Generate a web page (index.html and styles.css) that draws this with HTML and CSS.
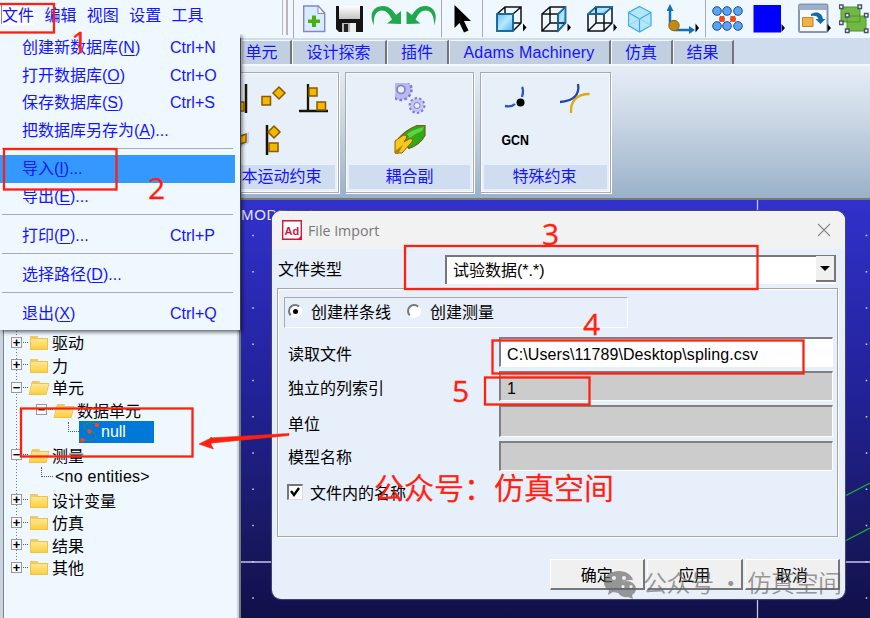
FILE: index.html
```html
<!DOCTYPE html>
<html lang="zh-CN">
<head>
    <meta charset="UTF-8">
    <meta name="viewport" content="width=device-width, initial-scale=1.0">
    <title>Adams View</title>
    <link rel="stylesheet" href="styles.css">
</head>
<body>
<div class="app">
    <header class="topbar">
        <nav class="menubar">
            <span class="active">文件</span>
            <span>编辑</span>
            <span>视图</span>
            <span>设置</span>
            <span>工具</span>
        </nav>
        <div class="toolbar">
            <!-- new / save / redo / undo -->
            <svg width="33" height="38" viewBox="303 0 33 38">
                <path d="M303.7 6h14.5l6.5 7v18.500h-21z" fill="#d9ecfb" stroke="#8585c8" stroke-width="1.4"/>
                <path d="M318 6v7.500h6.500z" fill="#fff" stroke="#8585c8"/>
                <path d="M312 15.500h4v4h4v3.500h-4v4h-4v-4h-4v-3.500h4z" fill="#4aaf12"/>
            </svg>
            <svg width="35" height="38" viewBox="336 0 35 38">
                <path d="M336 6h27v26h-24l-3-3z" fill="#151515"/>
                <path d="M339 6h21v13h-21z" fill="url(#shine)"/>
                <path d="M342 23h14v9h-14z" fill="#b9b9b9"/>
                <path d="M344 24h4v8h-4z" fill="#222"/>
                <path d="M350 23h6v9h-6z" fill="#eee"/>
            </svg>
            <svg width="35" height="38" viewBox="371 0 35 38">
                <path d="M374 25.500c-6-12 0-19.500 9-19.500 6 0 10 4 13 9l5-4v13l-14-.5 5-4c-3-6-6-9-10-9-6 0-9 6-8 15z" fill="#22a84c"/>
            </svg>
            <svg width="35" height="38" viewBox="406 0 35 38">
                <path d="M434 25.500c5-12-1-19.500-9-19.500-6 0-10 4-13 9l-5.500-4v13l14-.5-5-4c3-6 6-9 10-9 6 0 9 6 8.500 15z" fill="#22a84c"/>
            </svg>
            <i class="split"></i>
            <svg width="40" height="38" viewBox="442 0 40 38">
                <path d="M454.500 5v23l5-5 4.500 9.500 4.500-2-4.500-9.500h7z" fill="#000"/>
            </svg>
            <i class="split"></i>
            <!-- view cubes -->
            <svg width="58" height="38" viewBox="483 0 58 38">
                <path d="M497 14h16v17h-16z" fill="url(#face)"/>
                <path d="M497 14l8-7h16v16l-8 8h-16zM497 14h16v17M513 14l8-7M505 7v6M513 23h8" fill="none" stroke="#111" stroke-width="1.5"/>
                <path d="M497 14h16v17h-16z" fill="none" stroke="#1476b8" stroke-width="1.500"/>
                <path d="M523 23.500v8l3.500-4z"/>
            </svg>
            <svg width="46" height="38" viewBox="541 0 46 38">
                <path d="M558 14l7.500-7v16l-7.500 8z" fill="url(#face)"/>
                <path d="M542 14l8-7h15.500v16l-7.500 8h-16zM542 14h16v17M558 14l7.500-7M550 7v16h15.500M550 23l-8 8" fill="none" stroke="#111" stroke-width="1.500"/>
                <path d="M558 14l7.500-7v16l-7.500 8z" fill="none" stroke="#1476b8" stroke-width="1.300"/>
                <path d="M567.500 23.500v8l3.500-4z"/>
            </svg>
            <svg width="41" height="38" viewBox="587 0 41 38">
                <path d="M588 14l8-7h16l-8 7z" fill="url(#face)"/>
                <path d="M588 14l8-7h16v16l-8 8h-16zM588 14h16v17M604 14l8-7M596 7v16h16M596 23l-8 8" fill="none" stroke="#111" stroke-width="1.500"/>
                <path d="M588 14l8-7h16l-8 7z" fill="none" stroke="#1476b8" stroke-width="1.300"/>
                <path d="M613.500 23.500v8l3.500-4z"/>
            </svg>
            <svg width="39" height="38" viewBox="628 0 39 38">
                <path d="M639.500 6.500l11.500 6v13l-11.500 6.500-11-6.500v-13z" fill="#b5e6fc" stroke="#39abe6" stroke-width="1.200"/>
                <path d="M628.500 12.500l11 6.500v13M651 12.500l-11.500 6.500" fill="none" stroke="#39abe6" stroke-width="1.200"/>
                <path d="M629 25l10.500-6 11 6" fill="none" stroke="#8fd2f2"/>
            </svg>
            <svg width="38" height="38" viewBox="667 0 38 38">
                <path d="M670 26V9M674 30h17" stroke="#1270ba" stroke-width="2.500"/>
                <path d="M666.500 11l3.500-7 3.500 7zM689 26v8l6-4z" fill="#1270ba"/>
                <circle cx="674" cy="25.500" r="5.200" fill="#c18a16" stroke="#936606"/>
                <path d="M695.500 23.500v9l3.500-4.500z"/>
            </svg>
            <i class="split"></i>
            <svg width="47" height="38" viewBox="706 0 47 38">
                <path d="M717 11l5 8-5 7M727 11l-5 8 5 7M727 11l6 8-6 7M738 11l-5 8 5 7" stroke="#333" fill="none" stroke-dasharray="2 1"/>
                <g fill="#5ba4f4" stroke="#174f97">
                    <circle cx="717" cy="11" r="4.300"/><circle cx="727" cy="11" r="4.300"/><circle cx="738" cy="11" r="4.300"/>
                    <circle cx="717" cy="26" r="4.300"/><circle cx="727" cy="26" r="4.300"/><circle cx="738" cy="26" r="4.300"/>
                </g>
                <circle cx="722" cy="19" r="3" fill="#f4461b"/><circle cx="733" cy="19" r="3" fill="#f4461b"/>
            </svg>
            <svg width="45" height="38" viewBox="753 0 45 38">
                <path d="M753.500 5h27.500v27.500h-27.500z" fill="#00f"/>
                <path d="M781.500 24v8l3.500-4z"/>
            </svg>
            <svg width="41" height="38" viewBox="798 0 41 38">
                <rect x="799" y="4.500" width="28.500" height="27.500" rx="1.500" fill="#f7fafd" stroke="#8497b4" stroke-width="2"/>
                <path d="M799 5h28v5h-28z" fill="#9caecb"/>
                <path d="M802.500 17.500h10.500v9h-10.500z" fill="#efb244" stroke="#bc862b"/>
                <path d="M811 14c6-3 11-1 12 5h2.500l-5 5-5-5h3c-1-3-3-4-7.500-3z" fill="#126aa8"/>
                <path d="M827.500 24v8l3.500-4z"/>
            </svg>
            <svg width="31" height="38" viewBox="839 0 31 38">
                <path d="M841 7h19v15h-19zM847 16h19v15h-19z" fill="#72b844" stroke="#4e9425"/>
                <g fill="#fff" stroke="#47516b" stroke-width="1.400">
                    <path d="M839.500 5h3.500v3.500h-3.500zM858 5h3.500v3.500h-3.500zM839.500 21h3.500v3.500h-3.500zM845.500 13.500h3.500v3.500h-3.500zM864.500 13.500h3.500v3.500h-3.500zM845.500 29h3.500v3.500h-3.500zM864.500 29h3.500v3.500h-3.500z"/>
                </g>
            </svg>
        </div>
    </header>

    <div class="workspace">
        <aside class="browser">
            <ul class="tree">
                <li><i class="toggle">+</i><i class="folder"></i>驱动</li>
                <li><i class="toggle">+</i><i class="folder"></i>力</li>
                <li><i class="toggle">−</i><i class="folder open"></i>单元</li>
                <li class="level2"><i class="toggle">−</i><i class="folder open"></i>数据单元</li>
                <li class="level3"><i class="branch"></i><span class="selected">
                    <svg width="22" height="22" viewBox="0 0 22 22">
                        <path d="M18 3C6-1 1 6 9 9c13 4 9 12-6 10" fill="none" stroke="#357f78" stroke-width="1.300"/>
                        <circle cx="18" cy="4" r="2.200" fill="#f24820"/><circle cx="10.500" cy="10.500" r="2.200" fill="#f24820"/><circle cx="3.500" cy="19" r="2.200" fill="#f24820"/>
                    </svg>null</span></li>
                <li><i class="toggle">−</i><i class="folder open"></i>测量</li>
                <li class="level2 leaf"><i class="branch"></i>&lt;no entities&gt;</li>
                <li><i class="toggle">+</i><i class="folder"></i>设计变量</li>
                <li><i class="toggle">+</i><i class="folder"></i>仿真</li>
                <li><i class="toggle">+</i><i class="folder"></i>结果</li>
                <li><i class="toggle">+</i><i class="folder"></i>其他</li>
            </ul>
        </aside>

        <main class="main">
            <div class="tabs">
                <span class="tab w51">单元</span>
                <span class="tab w95">设计探索</span>
                <span class="tab w62">插件</span>
                <span class="tab w162 latin">Adams Machinery</span>
                <span class="tab w62">仿真</span>
                <span class="tab w60">结果</span>
            </div>
            <div class="ribbon">
                <section class="panel joints">
                    <svg class="art" width="98" height="86" viewBox="241 74 98 86">
                        <path d="M246 83v29" stroke="#191400" stroke-width="2.500"/>
                        <g fill="#f3b800" stroke="#8a5a00" stroke-width="1.500">
                            <path d="M238 101h6v9h-6zM262 95.500h8.500v8.500h-8.500zM279 86l6 6-6 6-6-6z"/>
                        </g>
                        <path d="M308 83v26M299 110h29" stroke="#191400" stroke-width="2.300"/>
                        <path d="M309 87h8v8h-8zM317 101h8.500v8h-8.500z" fill="#f3b800" stroke="#8a5a00" stroke-width="1.500"/>
                        <path d="M240 134l9-3v11l-9 5z" fill="#c9ccf2"/>
                        <path d="M238 136l8-3v8l-8 3z" fill="#f3b800" stroke="#8a5a00" stroke-width="1.500"/>
                        <path d="M267 124v30" stroke="#191400" stroke-width="2.500"/>
                        <path d="M274 125l6 6-6 6-6-6zM269 142h9v8.500h-9z" fill="#f3b800" stroke="#8a5a00" stroke-width="1.500"/>
                    </svg>
                    <h3>本运动约束</h3>
                </section>
                <section class="panel couplers">
                    <svg class="art" width="127" height="86" viewBox="346 74 127 86">
                        <svg x="395" y="82" width="31" height="31" viewBox="395 82 31 31">
                            <g fill="none" stroke="#7c7cd0">
                                <circle cx="401" cy="88.500" r="7" stroke="#b9b9f1" stroke-width="7"/>
                                <circle cx="401" cy="88.500" r="10.500" stroke-width="2.500" stroke-dasharray="2.700 2.400"/>
                                <circle cx="401" cy="88.500" r="4" stroke-width="1.600"/>
                                <circle cx="417" cy="104.500" r="5" stroke="#c5c5f5" stroke-width="4"/>
                                <circle cx="417" cy="104.500" r="7.400" stroke-width="2" stroke-dasharray="2.500 2.100"/>
                                <circle cx="417" cy="104.500" r="3"/>
                            </g>
                        </svg>
                        <path d="M399 137c5-6 12-10 18-12.500h8v10c-4 7-10 11-16 13z" fill="#2eac18" stroke="#7c5a14" stroke-width="1.200"/>
                        <path d="M407 133c6-4 12-6 17-7l-2 4c-5 2-9 4-12 7z" fill="#5fd344"/>
                        <path d="M395 140l7-5c3-2 6 0 4 3l-2 3 5-3c3-1 5 1 2 4l-9 10h-7z" fill="#f4c81c" stroke="#936000"/>
                        <path d="M395 150l8-6-5 9h-3z" fill="#b08400"/>
                    </svg>
                    <h3>耦合副</h3>
                </section>
                <section class="panel special">
                    <svg class="art" width="129" height="86" viewBox="481 74 129 86">
                        <path d="M522 86c2 3 1 6 0 10M505 105c5 1 8 0 10-2" fill="none" stroke="#2456c8" stroke-width="2.300"/>
                        <circle cx="520.500" cy="101.500" r="4"/>
                        <path d="M589.500 93c-14 0-19 8-18.500 19" fill="none" stroke="#deaa0e" stroke-width="2.300"/>
                        <path d="M560 101c13-1 20-7 18-18" fill="none" stroke="#2444b4" stroke-width="2.300"/>
                        <text x="501.500" y="144" textLength="27.500" lengthAdjust="spacingAndGlyphs" class="gcn">GCN</text>
                    </svg>
                    <h3>特殊约束</h3>
                </section>
            </div>
            <div class="viewport">
                <svg width="629" height="418" viewBox="241 200 629 418">
                    <path d="M757.500 200v418M241 562h629" stroke="#c5c5e6" stroke-width="1.300"/>
                    <path d="M845 496l25-13M845 541l25-13" stroke="#15b52d" stroke-width="1.300"/>
                    <path d="M253 234.800V618M866.500 234.800V618" stroke="#d4d4ef" stroke-width="1.500" stroke-dasharray="1.500 34.750"/>
                    <text x="241" y="220" class="model">MODEL_1</text>
                </svg>
            </div>
        </main>
    </div>

    <div class="file-menu">
        <div class="item">创建新数据库(<u>N</u>)<kbd>Ctrl+N</kbd></div>
        <div class="item">打开数据库(<u>O</u>)<kbd>Ctrl+O</kbd></div>
        <div class="item">保存数据库(<u>S</u>)<kbd>Ctrl+S</kbd></div>
        <div class="item">把数据库另存为(<u>A</u>)...</div>
        <hr>
        <div class="item hover">导入(<u>I</u>)...</div>
        <div class="item">导出(<u>E</u>)...</div>
        <hr>
        <div class="item">打印(<u>P</u>)...<kbd>Ctrl+P</kbd></div>
        <hr>
        <div class="item">选择路径(<u>D</u>)...</div>
        <hr>
        <div class="item">退出(<u>X</u>)<kbd>Ctrl+Q</kbd></div>
    </div>

    <div class="dialog">
        <div class="titlebar">
            <svg width="20" height="20" viewBox="0 0 20 20">
                <path d="M.7.700h18.600v18.600H.7z" fill="#fff" stroke="#c8193c" stroke-width="1.400"/>
                <path d="M20 15v5h-5z" fill="#c8193c"/>
                <text x="2.500" y="15" class="logo">Ad</text>
            </svg>
            <span class="title">File Import</span>
            <svg width="14" height="14" viewBox="0 0 14 14"><path d="M1 1l12 12M13 1L1 13" stroke="#888" stroke-width="1.100"/></svg>
        </div>
        <div class="type-row">
            <label>文件类型</label>
            <div class="combo">试验数据(*.*)<i class="drop"></i></div>
        </div>
        <div class="group">
            <div class="radios">
                <i class="radio on"></i><span>创建样条线</span>
                <i class="radio"></i><span>创建测量</span>
            </div>
            <div class="field h34"><label>读取文件</label><div class="input white">C:\Users\11789\Desktop\spling.csv</div></div>
            <div class="field h34"><label>独立的列索引</label><div class="input">1</div></div>
            <div class="field h36"><label>单位</label><div class="input"></div></div>
            <div class="field h30"><label>模型名称</label><div class="input"></div></div>
            <div class="check-row">
                <i class="checkbox"><svg width="12" height="12" viewBox="0 0 12 12"><path d="M2 5l3 4 5-7" fill="none" stroke="#000" stroke-width="2.400"/></svg></i>
                <span>文件内的名称</span>
            </div>
        </div>
        <div class="buttons">
            <button>确定</button>
            <button>应用</button>
            <button>取消</button>
        </div>
    </div>

    <!-- step marks drawn over the windows -->
    <svg class="marks" width="870" height="618" viewBox="0 0 870 618">
        <g fill="none" stroke="#ff2010" stroke-width="2.300">
            <rect x="-3" y="4" width="57" height="28.500"/>
            <rect x="4" y="149" width="112.500" height="40.500"/>
            <rect x="21" y="408.500" width="171.500" height="48"/>
            <rect x="405" y="246" width="352.500" height="43"/>
            <rect x="492.500" y="340.500" width="311" height="33"/>
            <rect x="485" y="377.500" width="104.500" height="27"/>
        </g>
        <path d="M289 433.500l-79 4.500 2-.500-13 6.500 14.500 5-2.500-4.500 1-1.500 77-7.500z" fill="#ff2010" stroke="#ff2010" stroke-width=".6"/>
        <g class="step">
            <text x="71" y="53">1</text>
            <text x="148" y="199">2</text>
            <text x="542" y="245">3</text>
            <text x="583" y="335">4</text>
            <text x="452" y="402">5</text>
        </g>
        <text x="374" y="499" class="account">公众号：仿真空间</text>
        <g class="watermark">
            <path fill-rule="evenodd" d="M619 571c-9 0-15 5-15 11 0 4 2 7 5 8l-1 5 5-3 5 1c-2-8 5-14 15-13-1-5-7-9-14-9zm-5 5a2 2 0 1 1 0 4 2 2 0 0 1 0-4zm10 0a2 2 0 1 1 0 4 2 2 0 0 1 0-4z"/>
            <path fill-rule="evenodd" d="M627 581c-6 0-10 4-10 8 0 5 5 9 11 8l5 2-1-4c2-1 4-3 4-6 0-4-4-8-9-8zm-4 4a1.600 1.600 0 1 1 0 3.200 1.600 1.600 0 0 1 0-3.200zm8 0a1.600 1.600 0 1 1 0 3.200 1.600 1.600 0 0 1 0-3.200z"/>
            <text x="643" y="592" textLength="199">公众号 · 仿真空间</text>
        </g>
        <defs>
            <linearGradient id="face" x1="0" y1="0" x2="1" y2="1"><stop offset="0" stop-color="#62c4f8"/><stop offset=".5" stop-color="#b8e8ff"/><stop offset="1" stop-color="#4ab3f0"/></linearGradient>
            <linearGradient id="shine" x1="0" y1="0" x2="0" y2="1"><stop offset="0" stop-color="#fff"/><stop offset="1" stop-color="#c4c4c4"/></linearGradient>
        </defs>
    </svg>
</div>
</body>
</html>
```
FILE: styles.css
```css
* {
    box-sizing: border-box;
}
body {
    margin: 0;
    font-family: "Liberation Sans", "Noto Sans CJK SC", sans-serif;
    font-size: 16px;
    color: #000;
    overflow: hidden;
}
i {
    font-style: normal;
}
.app {
    position: relative;
    width: 870px;
    height: 618px;
    overflow: hidden;
    display: flex;
    flex-direction: column;
    background: #eff7ff;
}
.topbar {
    display: flex;
    height: 38px;
    flex: none;
    background: #eff7ff;
}
.menubar {
    display: flex;
    width: 288px;
    gap: 10.4px;
    padding: 3px 0 0 2px;
    color: #1414ff;
    height: 35px;
    line-height: 25px;
    border-right: 2px solid #b8b8b8;
    box-shadow: inset -3px 0 #eff7ff, inset -4px 0 #b8b8b8;
}
.menubar span {
    width: 32px;
    white-space: nowrap;
}
.menubar .active {
    background: #fff;
    height: 21px;
    line-height: 24px;
    margin-top: 1px;
    box-shadow: -1px -1px #888;
}
.toolbar {
    display: flex;
    flex: none;
    width: 577px;
    margin-left: 5px;
    padding-left: 9px;
    border-left: 1px solid #aaa;
}
.toolbar svg {
    flex: none;
}
.split {
    width: 1px;
    height: 37px;
    flex: none;
    background: #aaa;
}

/* lower area */
.workspace {
    display: flex;
    height: 580px;
}
.browser {
    width: 241px;
    flex: none;
    padding-top: 293px;
    border-left: 3px solid #c9d4df;
    border-right: 2px solid #6f7780;
    box-shadow: inset 1px 0 #7d858c, inset -2px 0 #c9d4df;
}
.tree {
    list-style: none;
    margin: 0 0 0 13px;
    padding: 0;
    background: repeating-linear-gradient(#777 0 1px, transparent 1px 3px) no-repeat;
    background-size: 1px 236px;
}
.tree li {
    display: flex;
    align-items: center;
    height: 22.5px;
    margin-left: -5px;
    white-space: nowrap;
}
.tree .level2 {
    margin-left: 20px;
}
.tree .level3 {
    margin-left: 45px;
}
.toggle {
    width: 11px;
    height: 11px;
    border: 1px solid #999;
    background: #f6faff;
    font: bold 13px/9px "Liberation Sans", sans-serif;
    text-align: center;
    flex: none;
}
.toggle::after {
    content: "";
    display: block;
    width: 5px;
    border-top: 1px dotted #555;
    margin: -5px 0 0 11px;
}
.folder {
    width: 18px;
    height: 12px;
    margin: 4px 4px 0 8px;
    background: linear-gradient(#ffe795, #fbd03f);
    border: 1px solid #efc04a;
    position: relative;
    flex: none;
}
.folder::before {
    content: "";
    position: absolute;
    left: -1px;
    top: -3px;
    width: 8px;
    height: 3px;
    background: #f3c860;
}
.folder.open {
    transform: skewX(-14deg);
}
.branch {
    width: 11px;
    height: 10px;
    border-left: 1px dotted #555;
    border-bottom: 1px dotted #555;
    margin: -10px 0 0 7px;
    flex: none;
}
.leaf {
    letter-spacing: 0.25px;
}
.leaf .branch {
    margin: -10px 2px 0 5px;
    width: 12px;
}
.selected {
    display: flex;
    align-items: center;
    width: 75px;
    height: 22px;
    background: #0078d7;
    color: #fff;
}

/* ribbon */
.main {
    width: 629px;
    display: flex;
    flex-direction: column;
}
.tabs {
    display: flex;
    height: 26px;
    flex: none;
    background: #cfdcee;
    padding-top: 2px;
}
.tab {
    background: #c2cfe0;
    border-top: 1px solid #f3f8fd;
    border-right: 2px solid #747474;
    box-shadow: inset 1px 0 #f3f8fd;
    color: #1414ff;
    text-align: center;
    line-height: 24px;
    white-space: nowrap;
}
.w51 { width: 51px; padding-right: 8px; }
.w95 { width: 95px; }
.w62 { width: 62px; }
.w162 { width: 162px; }
.w60 { width: 61px; }
.latin {
    letter-spacing: 0.2px;
}
.ribbon {
    display: flex;
    align-items: flex-start;
    gap: 6px;
    height: 136px;
    flex: none;
    padding-top: 6px;
    border-top: 2px solid #f3f8fd;
    border-bottom: 2px solid #777;
    background: linear-gradient(#e6eef7, #cad7e5 40%, #9ab1ca);
}
.panel {
    height: 121px;
    background: #e7eff9;
    border: 1px solid #aaa;
    box-shadow: inset 0 0 0 1px #f6f9fd, 1px 1px #fff;
    display: flex;
    flex-direction: column;
    padding: 2px 0 0;
}
.joints {
    width: 98px;
    border-left: none;
}
.couplers {
    width: 129px;
}
.special {
    width: 131px;
}
.art {
    display: block;
    flex: none;
}
.panel h3 {
    margin: 4px 3px 0;
    height: 24px;
    background: #d0ddf0;
    color: #1414ff;
    font-size: 16px;
    font-weight: normal;
    line-height: 24px;
    text-align: center;
    white-space: nowrap;
}
.joints h3 {
    margin-left: 0;
    padding-right: 13px;
}
.special h3 {
    padding-right: 2px;
}
.gcn {
    font: bold 15px "Liberation Sans", sans-serif;
}
.viewport {
    height: 418px;
    background: linear-gradient(#3131cc, #22229a 45%, #191965 78%, #10104a);
}
.viewport svg {
    display: block;
}
.model {
    font: 15px "Liberation Sans", sans-serif;
    letter-spacing: 0.7px;
    fill: #e4e4f4;
}

/* file menu */
.file-menu {
    position: absolute;
    left: 0;
    top: 34px;
    width: 240px;
    height: 296px;
    background: #eff7ff;
    color: #1414ff;
    clip-path: inset(0 -6px -6px 0);
    box-shadow: 2px 2px 4px rgba(0, 0, 0, 0.6);
}
.item {
    height: 27.5px;
    line-height: 28px;
    padding: 0 19px 0 22px;
    margin-right: 5px;
    display: flex;
    white-space: nowrap;
}
.item.hover {
    background: #3399ff;
}
.item u {
    text-underline-offset: 2px;
}
kbd {
    font: inherit;
    width: 46px;
    margin-left: auto;
}
.file-menu hr {
    margin: 4px 7px 6.4px 2px;
    border: none;
    height: 1px;
    background: #aaa;
}

/* dialog */
.dialog {
    position: absolute;
    left: 272px;
    top: 211px;
    width: 573px;
    height: 388px;
    border-radius: 9px;
    overflow: hidden;
    background: #e7effa;
    box-shadow: 0 0 1px 1px #45457e;
}
.titlebar {
    display: flex;
    align-items: center;
    height: 38px;
    padding: 0 14px 0 10px;
    background: #f2f2f2;
}
.title {
    margin-left: 6px;
    flex: 1;
    font: 14.2px "Open Sans", sans-serif;
    color: #777;
}
.logo {
    font: bold 11px "Liberation Sans", sans-serif;
    fill: #c8193c;
}
.type-row {
    display: flex;
    align-items: center;
    height: 39px;
    padding: 1px 9px 0 6px;
}
.type-row label {
    width: 167px;
    margin-top: -2px;
}
.combo {
    flex: 1;
    display: flex;
    align-items: center;
    height: 29px;
    padding: 0 0 2px 6px;
    background: #fff;
    border-top: 2px solid #777;
    border-left: 2px solid #777;
}
.drop {
    margin-left: auto;
    width: 20px;
    height: 26px;
    background: #f0f0f0;
    border-right: 2px solid #777;
    border-bottom: 2px solid #777;
    display: flex;
    align-items: center;
    justify-content: center;
}
.drop::before {
    content: "";
    border: 5px solid transparent;
    border-top-color: #000;
    border-bottom: none;
}
.group {
    margin: 0 7px 0 5px;
    height: 249px;
    border: 1px solid #a5a5a5;
    box-shadow: inset 1px 1px #fff, 1px 1px #fff;
    padding: 8px 4px 0 6px;
}
.radios {
    display: flex;
    align-items: center;
    width: 344px;
    height: 31px;
    padding: 0 0 3px 3px;
    border: 1px solid #aaa;
    border-right-color: #fff;
    border-bottom-color: #fff;
    margin-bottom: 9px;
}
.radio {
    width: 14px;
    height: 14px;
    border-radius: 50%;
    border: 2px solid #fff;
    border-top-color: #777;
    border-left-color: #777;
    background: #fff;
    margin-right: 9px;
    display: flex;
    align-items: center;
    justify-content: center;
}
.radio.on::before {
    content: "";
    width: 5px;
    height: 5px;
    border-radius: 50%;
    background: #000;
}
.radios span {
    margin-right: 16px;
}
.field {
    display: flex;
    padding-left: 4px;
}
.field label {
    width: 212px;
    align-self: center;
    margin-top: -3px;
}
.input {
    flex: none;
    width: 334px;
    height: 30px;
    padding-left: 6px;
    background: #ccc;
    border: 2px solid #808080;
    border-right: 1px solid #fff;
    border-bottom: 1px solid #fff;
    line-height: 32px;
}
.white {
    background: #fff;
    letter-spacing: 0.1px;
}
.h34 { height: 34px; }
.h36 { height: 36px; }
.h36 .input { height: 32px; }
.h36 label { margin-top: 0; }
.h30 { height: 30px; }
.h30 label { margin-top: -1px; }
.check-row {
    display: flex;
    align-items: center;
    gap: 7px;
    margin-top: 9px;
    padding-left: 3px;
}
.checkbox {
    width: 16px;
    height: 16px;
    background: #fff;
    border: 2px solid #777;
    border-right: 1px solid #ddd;
    border-bottom: 1px solid #ddd;
}
.checkbox svg {
    display: block;
}
.buttons {
    display: flex;
    justify-content: flex-end;
    gap: 2px;
    margin-top: 22px;
    padding-right: 5px;
}
.buttons button {
    width: 95.5px;
    height: 31px;
    background: #f0f0f0;
    border: 1px solid #fff;
    border-right: 2px solid #777;
    border-bottom: 2px solid #777;
    font: inherit;
    padding: 0;
}

/* marks */
.marks {
    position: absolute;
    left: 0;
    top: 0;
}
.step {
    font: 30px "Open Sans", sans-serif;
    fill: #ff2010;
    stroke: #ff2010;
    stroke-width: 0.3px;
}
.account {
    font: 350 30px "Noto Sans CJK SC", sans-serif;
    fill: #ff2010;
    stroke: #ff2010;
    stroke-width: 0.3px;
}
.watermark {
    font: 350 24px "Noto Sans CJK SC", sans-serif;
    fill: #666;
    opacity: 0.65;
}
```
